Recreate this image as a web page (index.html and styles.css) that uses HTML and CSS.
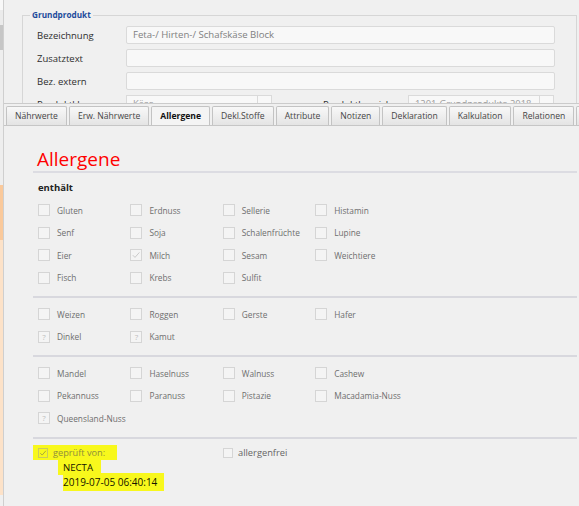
FILE: index.html
```html
<!DOCTYPE html>
<html lang="de">
<head>
  <meta charset="UTF-8" />
  <title>Allergene</title>
  <link rel="stylesheet" href="styles.css">
</head>
<body>
  <div class="app">
    <div class="edge"></div>

    <div class="main">
      <div class="head">
        <fieldset class="group">
          <legend>Grundprodukt</legend>
          <div class="row">
            <label>Bezeichnung</label>
            <div class="field">Feta-/ Hirten-/ Schafskäse Block</div>
          </div>
          <div class="row">
            <label>Zusatztext</label>
            <div class="field"></div>
          </div>
          <div class="row">
            <label>Bez. extern</label>
            <div class="field"></div>
          </div>
          <div class="row">
            <label>Produktklasse</label>
            <div class="combo">Käse</div>
            <div class="drop">⌄</div>
            <label class="lab2">Produktbereich</label>
            <div class="combo">1201-Grundprodukte 2018</div>
            <div class="drop">⌄</div>
          </div>
        </fieldset>
      </div>

      <div class="tabs">
        <div class="tab">Nährwerte</div>
        <div class="tab">Erw. Nährwerte</div>
        <div class="tab active">Allergene</div>
        <div class="tab">Dekl.Stoffe</div>
        <div class="tab">Attribute</div>
        <div class="tab">Notizen</div>
        <div class="tab">Deklaration</div>
        <div class="tab">Kalkulation</div>
        <div class="tab">Relationen</div>
        <div class="tab">Historie</div>
      </div>

      <div class="panel">
        <h1>Allergene</h1>
        <div class="sub">enthält</div>

        <div class="grid">
          <div class="item"><span class="box"></span>Gluten</div>
          <div class="item"><span class="box"></span>Erdnuss</div>
          <div class="item"><span class="box"></span>Sellerie</div>
          <div class="item"><span class="box"></span>Histamin</div>
          <div class="item"><span class="box"></span>Senf</div>
          <div class="item"><span class="box"></span>Soja</div>
          <div class="item"><span class="box"></span>Schalenfrüchte</div>
          <div class="item"><span class="box"></span>Lupine</div>
          <div class="item"><span class="box"></span>Eier</div>
          <div class="item"><span class="box"><svg viewBox="0 0 10 10"><path d="M1.8 5.2 L4 7.4 L8.4 2.4" fill="none" stroke="#c4c4c4" stroke-width="0.9"/></svg></span>Milch</div>
          <div class="item"><span class="box"></span>Sesam</div>
          <div class="item"><span class="box"></span>Weichtiere</div>
          <div class="item"><span class="box"></span>Fisch</div>
          <div class="item"><span class="box"></span>Krebs</div>
          <div class="item"><span class="box"></span>Sulfit</div>
        </div>

        <div class="sep"></div>

        <div class="grid">
          <div class="item"><span class="box"></span>Weizen</div>
          <div class="item"><span class="box"></span>Roggen</div>
          <div class="item"><span class="box"></span>Gerste</div>
          <div class="item"><span class="box"></span>Hafer</div>
          <div class="item"><span class="box q">?</span>Dinkel</div>
          <div class="item"><span class="box q">?</span>Kamut</div>
        </div>

        <div class="sep"></div>

        <div class="grid">
          <div class="item"><span class="box"></span>Mandel</div>
          <div class="item"><span class="box"></span>Haselnuss</div>
          <div class="item"><span class="box"></span>Walnuss</div>
          <div class="item"><span class="box"></span>Cashew</div>
          <div class="item"><span class="box"></span>Pekannuss</div>
          <div class="item"><span class="box"></span>Paranuss</div>
          <div class="item"><span class="box"></span>Pistazie</div>
          <div class="item"><span class="box"></span>Macadamia-Nuss</div>
          <div class="item"><span class="box q">?</span>Queensland-Nuss</div>
        </div>

        <div class="sep"></div>

        <div class="footer">
          <div class="checked-by">
            <div class="hl hl1"><span class="box small on"><svg viewBox="0 0 10 10"><path d="M1.6 5.2 L4 7.6 L8.6 2.2" fill="none" stroke="#9c9c3c" stroke-width="1.1"/></svg></span>geprüft von:</div>
            <div class="hl hl2">NECTA</div>
            <div class="hl hl3">2019-07-05 06:40:14</div>
          </div>
          <div class="free"><span class="box small"></span>allergenfrei</div>
        </div>
      </div>
    </div>
  </div>
</body>
</html>
```

FILE: styles.css
```css
body {
  margin: 0;
  background: #f0f0f0;
  font-family: "Open Sans", "Liberation Sans", sans-serif;
  overflow: hidden;
}

.app {
  display: flex;
  height: 506px;
}

/* thin strip on the far left */
.edge {
  width: 3px;
  flex: none;
  border-right: 1px solid #cfcfcf;
  background: linear-gradient(to bottom,
    #f8f8f8 0, #f8f8f8 10px,
    #ebebeb 10px, #ebebeb 25px,
    #c6c6c6 25px, #c6c6c6 50px,
    #eeeeee 50px, #eeeeee 185px,
    #fac99b 185px, #fac99b 240px,
    #fde2c8 240px, #fde2c8 495px,
    #f0f0f0 495px);
}

.main {
  flex: 1;
  min-width: 0;
  display: flex;
  flex-direction: column;
}

/* upper form, cut off by the tab bar */
.head {
  height: 103px;
  overflow: hidden;
  box-sizing: border-box;
  padding: 9px 0 0 18px;
}

.group {
  margin: 0;
  width: 555px;
  box-sizing: border-box;
  border: 1px solid #d6d6d6;
  padding: 5px 21px 10px 14px;
  min-width: 0;
}

.group legend {
  margin-left: -7px;
  padding: 0 2px;
  font-size: 8.2px;
  line-height: 12px;
  font-weight: bold;
  color: #1d4b9c;
}

.row {
  display: flex;
  align-items: center;
  height: 18px;
  margin-bottom: 5px;
}

.row label {
  width: 89px;
  flex: none;
  font-size: 9.5px;
  color: #2e2e2e;
}

.row .lab2 {
  margin-left: 51px;
  width: 85px;
}

.field,
.combo,
.drop {
  height: 18px;
  box-sizing: border-box;
  border: 1px solid #dadada;
  background: #f8f8f8;
  line-height: 16px;
  color: #808080;
}

.field {
  flex: 1;
  border-radius: 2px;
  padding-left: 6px;
  font-size: 9.6px;
}

.combo {
  width: 132px;
  flex: none;
  padding-left: 6px;
  font-size: 9.4px;
  color: #9a9a9a;
}

.drop {
  width: 14px;
  flex: none;
  border-left: 0;
  text-align: center;
  font-size: 9px;
  color: #aaa;
}

/* tab bar */
.tabs {
  display: flex;
  gap: 2px;
  padding: 2px 0 0 2px;
  border-top: 1px solid #cbcbcb;
  border-bottom: 1px solid #c6c6c6;
  overflow: hidden;
}

.tab {
  flex: none;
  height: 19px;
  box-sizing: border-box;
  padding: 0 8px;
  border: 1px solid #c3c3c3;
  border-bottom: 0;
  border-radius: 2px 2px 0 0;
  background: linear-gradient(#f8f8f8, #e4e4e4);
  font-size: 8.6px;
  line-height: 18px;
  color: #454545;
  white-space: nowrap;
}

.tab.active {
  height: 20px;
  margin-bottom: -1px;
  background: #f4f4f4;
  font-weight: bold;
  color: #111;
}

/* allergen panel */
.panel {
  padding: 21px 2px 0 29px;
}

.panel h1 {
  margin: 0;
  padding-left: 4px;
  font-size: 19px;
  font-weight: normal;
  line-height: 24px;
  color: #ff0000;
  border-bottom: 2px solid #dcdce2;
}

.sub {
  margin-top: 8px;
  padding-left: 5px;
  font-size: 9.5px;
  line-height: 14px;
  font-weight: bold;
  color: #222;
}

.grid {
  display: grid;
  grid-template-columns: repeat(4, 92.4px);
  grid-auto-rows: 22.5px;
  padding-left: 5px;
}

.sub + .grid {
  margin-top: 4px;
}

.item {
  display: flex;
  align-items: center;
  font-size: 8.3px;
  color: #6e6e6e;
}

.box {
  width: 12px;
  height: 12px;
  flex: none;
  box-sizing: border-box;
  margin-right: 7px;
  border: 1px solid #d5d5d5;
  background: #f4f4f4;
  display: flex;
  align-items: center;
  justify-content: center;
}

.box svg {
  width: 10px;
  height: 10px;
}

.box.q {
  font-size: 8px;
  line-height: 1;
  color: #bdbdbd;
}

.box.small {
  width: 10px;
  height: 10px;
  margin-right: 5px;
}

.box.small svg {
  width: 8px;
  height: 8px;
}

.box.on {
  border-color: #cbcb5a;
  background: transparent;
}

.sep {
  height: 2px;
  margin: 7px 0 5px;
  background: #d8d8de;
}

.footer {
  display: grid;
  grid-template-columns: 190px 1fr;
  padding-top: 1.5px;
}

.hl {
  display: flex;
  align-items: center;
  width: max-content;
  background: #f8f81c;
}

.hl1 {
  height: 15px;
  padding: 0 12px 0 5px;
  font-size: 9.2px;
  color: #8e8e3c;
}

.hl2 {
  height: 15px;
  margin-left: 25px;
  padding: 0 8px 0 5px;
  font-size: 9.6px;
  color: #151500;
}

.hl3 {
  height: 18px;
  margin-top: -2px;
  margin-left: 30px;
  padding: 0 7px 0 0;
  font-size: 10px;
  color: #151500;
}

.free {
  display: flex;
  align-items: center;
  height: 15px;
  font-size: 9.3px;
  color: #666;
}
```
